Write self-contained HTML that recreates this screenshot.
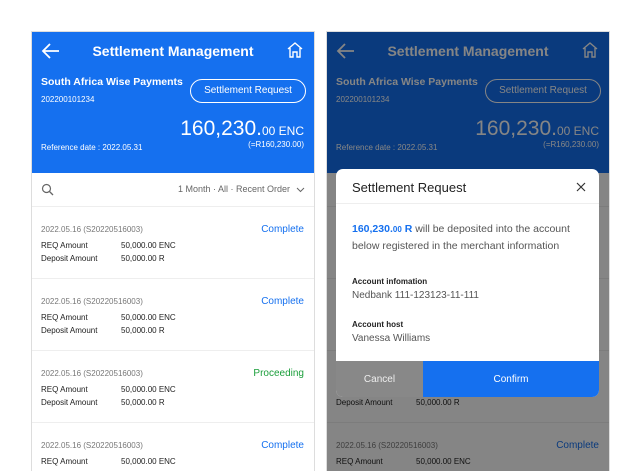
<!DOCTYPE html>
<html><head><meta charset="utf-8"><style>
*{margin:0;padding:0;box-sizing:border-box}
html,body{width:640px;height:471px;overflow:hidden}
body{background:#fff;position:relative;font-family:"Liberation Sans",sans-serif}
.ph{position:absolute;top:31px;width:284px;height:440px;border:1px solid #ddd;border-bottom:none;background:#fff;overflow:hidden}
.hd{position:absolute;left:0;top:0;width:100%;height:141px;background:#1570ef;color:#fff}
.t{position:absolute;top:11px;width:100%;text-align:center;font-weight:bold;font-size:14px}
.nm{position:absolute;left:9px;top:44px;font-weight:bold;font-size:10.5px}
.id{position:absolute;left:9px;top:63px;font-size:8px}
.btn{position:absolute;left:158px;top:47px;width:116px;height:24px;border:1px solid #fff;border-radius:12px;font-size:10px;text-align:center;line-height:22px}
.amt{position:absolute;right:10px;top:85px;font-size:21px}
.amt small{font-size:12px}
.sub{position:absolute;right:10px;top:108px;font-size:8px}
.rd{position:absolute;left:9px;top:111px;font-size:8px}
.fl{position:absolute;top:141px;height:34px;width:100%;border-bottom:1px solid #eee;font-size:9px;color:#666}
.it{position:absolute;left:0;width:100%;height:72px;border-bottom:1px solid #eee;font-size:8px}
.it .d{position:absolute;left:9px;top:18px;color:#777}
.it .r{position:absolute;left:9px;color:#222}
.it .v{position:absolute;left:89px;color:#222}
.it .s{position:absolute;right:10px;top:17px;font-size:10px;color:#1570ef}
.ov{position:absolute;inset:0;background:rgba(0,0,0,.48)}
</style></head><body>

<div class="ph" style="left:31px" id="p1">
<div class="hd">
<svg style="position:absolute;left:9px;top:11px" width="20" height="16" viewBox="0 0 20 16"><path d="M18 8H2M9 1L2 8l7 7" stroke="#fff" stroke-width="1.8" fill="none"/></svg>
<div class="t">Settlement Management</div>
<svg style="position:absolute;left:254px;top:9px" width="18" height="18" viewBox="0 0 18 18"><path d="M2 8L9 2l7 6M4 7v9h3v-5h4v5h3V7" stroke="#fff" stroke-width="1.4" fill="none"/></svg>
<div class="nm">South Africa Wise Payments</div>
<div class="id">202200101234</div>
<div class="btn">Settlement Request</div>
<div class="amt">160,230.<small>00 ENC</small></div>
<div class="sub">(=R160,230.00)</div>
<div class="rd">Reference date : 2022.05.31</div>
</div>
<div class="fl">
<svg style="position:absolute;left:9px;top:10px" width="13" height="13" viewBox="0 0 13 13"><circle cx="5.5" cy="5.5" r="4" stroke="#666" stroke-width="1.2" fill="none"/><path d="M8.5 8.5L12 12" stroke="#666" stroke-width="1.3"/></svg>
<span style="position:absolute;right:24px;top:11px">1 Month · All · Recent Order</span>
<svg style="position:absolute;right:9px;top:14px" width="9" height="6" viewBox="0 0 9 6"><path d="M1 1l3.5 3.5L8 1" stroke="#666" fill="none"/></svg>
</div>
<div class="it" style="top:175px"><div class="d">2022.05.16 (S20220516003)</div><div class="r" style="top:34px">REQ Amount</div><div class="v" style="top:34px">50,000.00 ENC</div><div class="r" style="top:47px">Deposit Amount</div><div class="v" style="top:47px">50,000.00 R</div><div class="s">Complete</div></div>
<div class="it" style="top:247px"><div class="d">2022.05.16 (S20220516003)</div><div class="r" style="top:34px">REQ Amount</div><div class="v" style="top:34px">50,000.00 ENC</div><div class="r" style="top:47px">Deposit Amount</div><div class="v" style="top:47px">50,000.00 R</div><div class="s">Complete</div></div>
<div class="it" style="top:319px"><div class="d">2022.05.16 (S20220516003)</div><div class="r" style="top:34px">REQ Amount</div><div class="v" style="top:34px">50,000.00 ENC</div><div class="r" style="top:47px">Deposit Amount</div><div class="v" style="top:47px">50,000.00 R</div><div class="s" style="color:#1a9e3a">Proceeding</div></div>
<div class="it" style="top:391px"><div class="d">2022.05.16 (S20220516003)</div><div class="r" style="top:34px">REQ Amount</div><div class="v" style="top:34px">50,000.00 ENC</div><div class="r" style="top:47px">Deposit Amount</div><div class="v" style="top:47px">50,000.00 R</div><div class="s">Complete</div></div>
</div>

<div class="ph" style="left:326px">
<div class="hd">
<svg style="position:absolute;left:9px;top:11px" width="20" height="16" viewBox="0 0 20 16"><path d="M18 8H2M9 1L2 8l7 7" stroke="#fff" stroke-width="1.8" fill="none"/></svg>
<div class="t">Settlement Management</div>
<svg style="position:absolute;left:254px;top:9px" width="18" height="18" viewBox="0 0 18 18"><path d="M2 8L9 2l7 6M4 7v9h3v-5h4v5h3V7" stroke="#fff" stroke-width="1.4" fill="none"/></svg>
<div class="nm">South Africa Wise Payments</div>
<div class="id">202200101234</div>
<div class="btn">Settlement Request</div>
<div class="amt">160,230.<small>00 ENC</small></div>
<div class="sub">(=R160,230.00)</div>
<div class="rd">Reference date : 2022.05.31</div>
</div>
<div class="fl"></div>
<div class="it" style="top:175px"></div>
<div class="it" style="top:247px"></div>
<div class="it" style="top:319px"><div class="r" style="top:47px">Deposit Amount</div><div class="v" style="top:47px">50,000.00 R</div></div>
<div class="it" style="top:391px"><div class="d">2022.05.16 (S20220516003)</div><div class="r" style="top:34px">REQ Amount</div><div class="v" style="top:34px">50,000.00 ENC</div><div class="r" style="top:47px">Deposit Amount</div><div class="v" style="top:47px">50,000.00 R</div><div class="s">Complete</div></div>
<div class="ov"></div>
</div>

<div style="position:absolute;left:336px;top:169px;width:263px;height:228px;background:#fff;border-radius:7px;overflow:hidden">
<div style="position:absolute;left:16px;top:11px;font-size:13px;color:#222">Settlement Request</div>
<svg style="position:absolute;left:240px;top:13px" width="10" height="10" viewBox="0 0 10 10"><path d="M1 1l8 8M9 1l-8 8" stroke="#333" stroke-width="1.2"/></svg>
<div style="position:absolute;left:0;top:34px;width:100%;border-top:1px solid #eee"></div>
<div style="position:absolute;left:16px;top:52px;width:240px;font-size:10.5px;line-height:16px;color:#555"><b style="color:#1570ef">160,230.<span style="font-size:8px">00</span> R</b> will be deposited into the account below registered in the merchant information</div>
<div style="position:absolute;left:16px;top:108px;font-size:8px;font-weight:bold;color:#222">Account infomation</div>
<div style="position:absolute;left:16px;top:121px;font-size:10px;color:#555">Nedbank 111-123123-11-111</div>
<div style="position:absolute;left:16px;top:151px;font-size:8px;font-weight:bold;color:#222">Account host</div>
<div style="position:absolute;left:16px;top:164px;font-size:10px;color:#555">Vanessa Williams</div>
<div style="position:absolute;left:0;top:192px;width:87px;height:36px;background:#888;color:#eee;font-size:10px;text-align:center;line-height:38px">Cancel</div>
<div style="position:absolute;left:87px;top:192px;width:176px;height:36px;background:#1570ef;color:#fff;font-size:10px;text-align:center;line-height:38px">Confirm</div>
</div>
</body></html>
